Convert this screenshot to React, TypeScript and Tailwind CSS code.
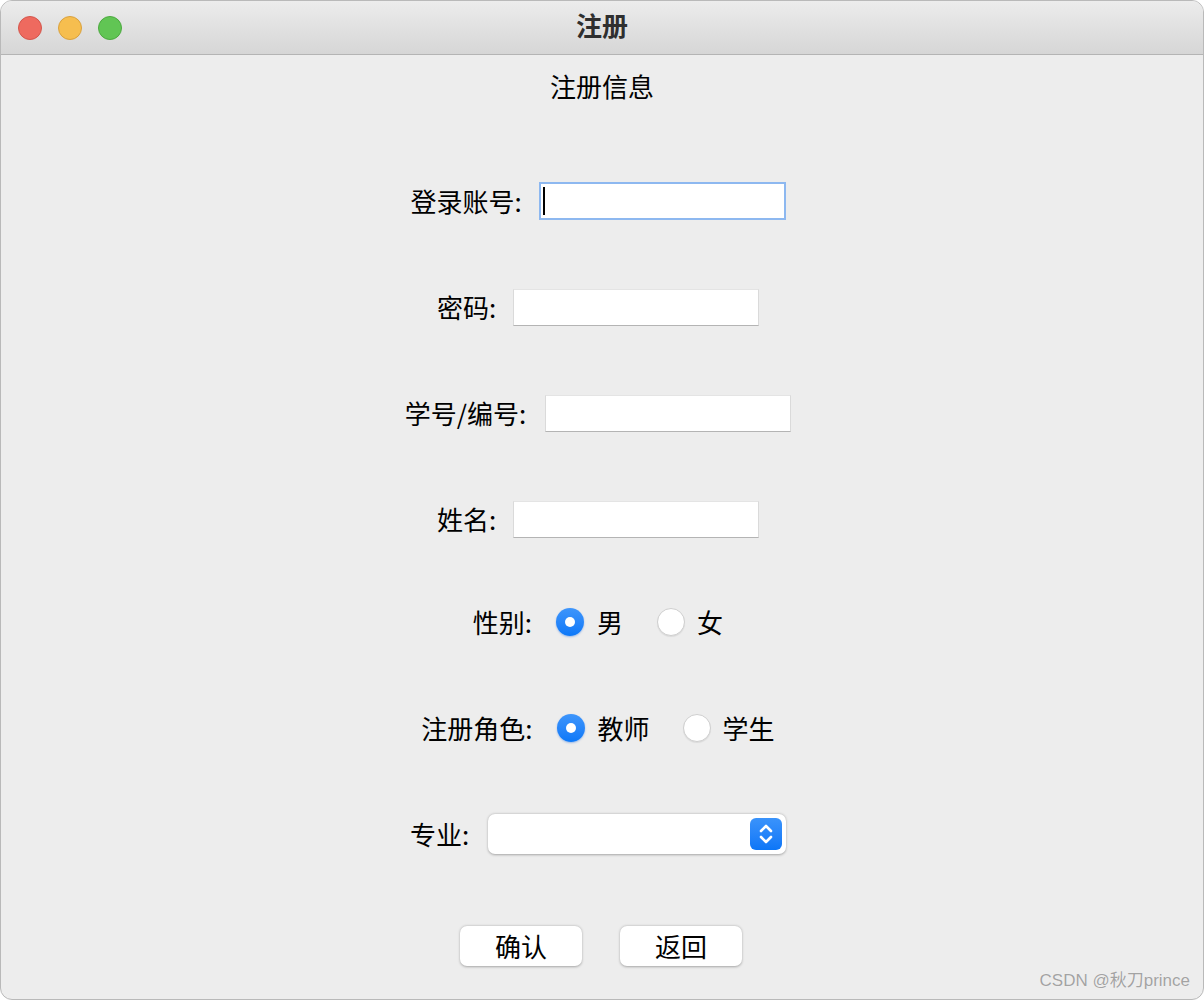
import React from "react";

const font = "font-['Noto_Sans_CJK_SC','Liberation_Sans',sans-serif]";

function TextInput({ focused = false }: { focused?: boolean }) {
  if (focused) {
    return (
      <div className="w-[247px] h-[38px] bg-white border-2 border-[#8db8f0] flex items-center pl-[2px]">
        <div className="w-[2px] h-[28px] bg-black" />
      </div>
    );
  }
  return (
    <div className="w-[246px] h-[37px] bg-white border border-[#dadada] border-b-[#b4b4b4] border-t-[#e4e4e4]" />
  );
}

function Radio({ checked }: { checked: boolean }) {
  if (checked) {
    return (
      <div className="w-[28px] h-[28px] rounded-full bg-gradient-to-b from-[#3d95fb] to-[#0a78f8] flex items-center justify-center shadow-[0_1px_2px_rgba(0,90,220,0.35)]">
        <div className="w-[10px] h-[10px] rounded-full bg-white" />
      </div>
    );
  }
  return (
    <div className="w-[28px] h-[28px] rounded-full bg-white border border-[#cfcfcf] shadow-[0_1px_1px_rgba(0,0,0,0.08)]" />
  );
}

function Row({ children, h }: { children: React.ReactNode; h: string }) {
  return <div className={`flex items-center justify-center pr-[8px] ${h}`}>{children}</div>;
}

export default function App() {
  return (
    <div className={`w-[1204px] h-[1000px] bg-white ${font} text-black`}>
      <div className="w-full h-full rounded-[12px] border border-[#b9b9b9] bg-[#ededed] overflow-hidden flex flex-col relative">
        <div className="h-[54px] shrink-0 grid grid-cols-3 items-center bg-gradient-to-b from-[#ececec] to-[#d6d6d6] border-b border-[#b4b4b4]">
          <div className="flex items-center gap-[16px] pl-[17px]">
            <div className="w-[24px] h-[24px] rounded-full bg-[#ee6a5f] border border-[#d4564c]" />
            <div className="w-[24px] h-[24px] rounded-full bg-[#f6be4f] border border-[#d9a13e]" />
            <div className="w-[24px] h-[24px] rounded-full bg-[#61c554] border border-[#4ca93f]" />
          </div>
          <div className="text-center text-[26px] font-bold text-[#2f2f2f] leading-none mb-[5px]">注册</div>
          <div />
        </div>

        <div className="mt-[14px] h-[34px] leading-[34px] text-center text-[26px]">注册信息</div>

        <div className="mt-[45px] flex flex-col">
          <Row h="h-[106px]">
            <span className="text-[26px] leading-none mr-[17px]">登录账号:</span>
            <TextInput focused />
          </Row>
          <Row h="h-[106px]">
            <span className="text-[26px] leading-none mr-[17px]">密码:</span>
            <TextInput />
          </Row>
          <Row h="h-[106px]">
            <span className="text-[26px] leading-none mr-[19px]">学号/编号:</span>
            <TextInput />
          </Row>
          <Row h="h-[106px]">
            <span className="text-[26px] leading-none mr-[17px]">姓名:</span>
            <TextInput />
          </Row>
          <Row h="h-[100px]">
            <span className="text-[26px] leading-none mr-[24px]">性别:</span>
            <Radio checked />
            <span className="text-[26px] leading-none ml-[13px] mr-[34px]">男</span>
            <Radio checked={false} />
            <span className="text-[26px] leading-none ml-[12px]">女</span>
          </Row>
          <Row h="h-[112px]">
            <span className="text-[26px] leading-none mr-[24px]">注册角色:</span>
            <Radio checked />
            <span className="text-[26px] leading-none ml-[13px] mr-[33px]">教师</span>
            <Radio checked={false} />
            <span className="text-[26px] leading-none ml-[12px]">学生</span>
          </Row>
          <Row h="h-[100px]">
            <span className="text-[26px] leading-none mr-[19px]">专业:</span>
            <div className="w-[298px] h-[40px] bg-white rounded-[7px] shadow-[0_0.5px_2.5px_rgba(0,0,0,0.3)] flex items-center justify-end pr-[4px]">
              <div className="w-[32px] h-[32px] rounded-[6px] bg-gradient-to-b from-[#3a93fb] to-[#0b76f7] flex items-center justify-center">
                <svg width="18" height="24" viewBox="0 0 18 24" fill="none" stroke="white" strokeWidth="2.6" strokeLinecap="round" strokeLinejoin="round">
                  <path d="M4 9 L9 4 L14 9" />
                  <path d="M4 15 L9 20 L14 15" />
                </svg>
              </div>
            </div>
          </Row>
          <div className="mt-[42px] flex items-center justify-center gap-[38px] pr-[2px]">
            <div className="w-[122px] h-[40px] bg-white rounded-[7px] shadow-[0_0.5px_2.5px_rgba(0,0,0,0.3)] flex items-center justify-center text-[26px] leading-none">确认</div>
            <div className="w-[122px] h-[40px] bg-white rounded-[7px] shadow-[0_0.5px_2.5px_rgba(0,0,0,0.3)] flex items-center justify-center text-[26px] leading-none">返回</div>
          </div>
        </div>

        <div className="absolute right-[13px] bottom-[6px] text-[17px] text-[#a3a3a3] font-['Liberation_Sans','Noto_Sans_CJK_SC',sans-serif] [text-shadow:0_0_1px_rgba(255,255,255,0.9)]">
          CSDN @秋刀prince
        </div>
      </div>
    </div>
  );
}
